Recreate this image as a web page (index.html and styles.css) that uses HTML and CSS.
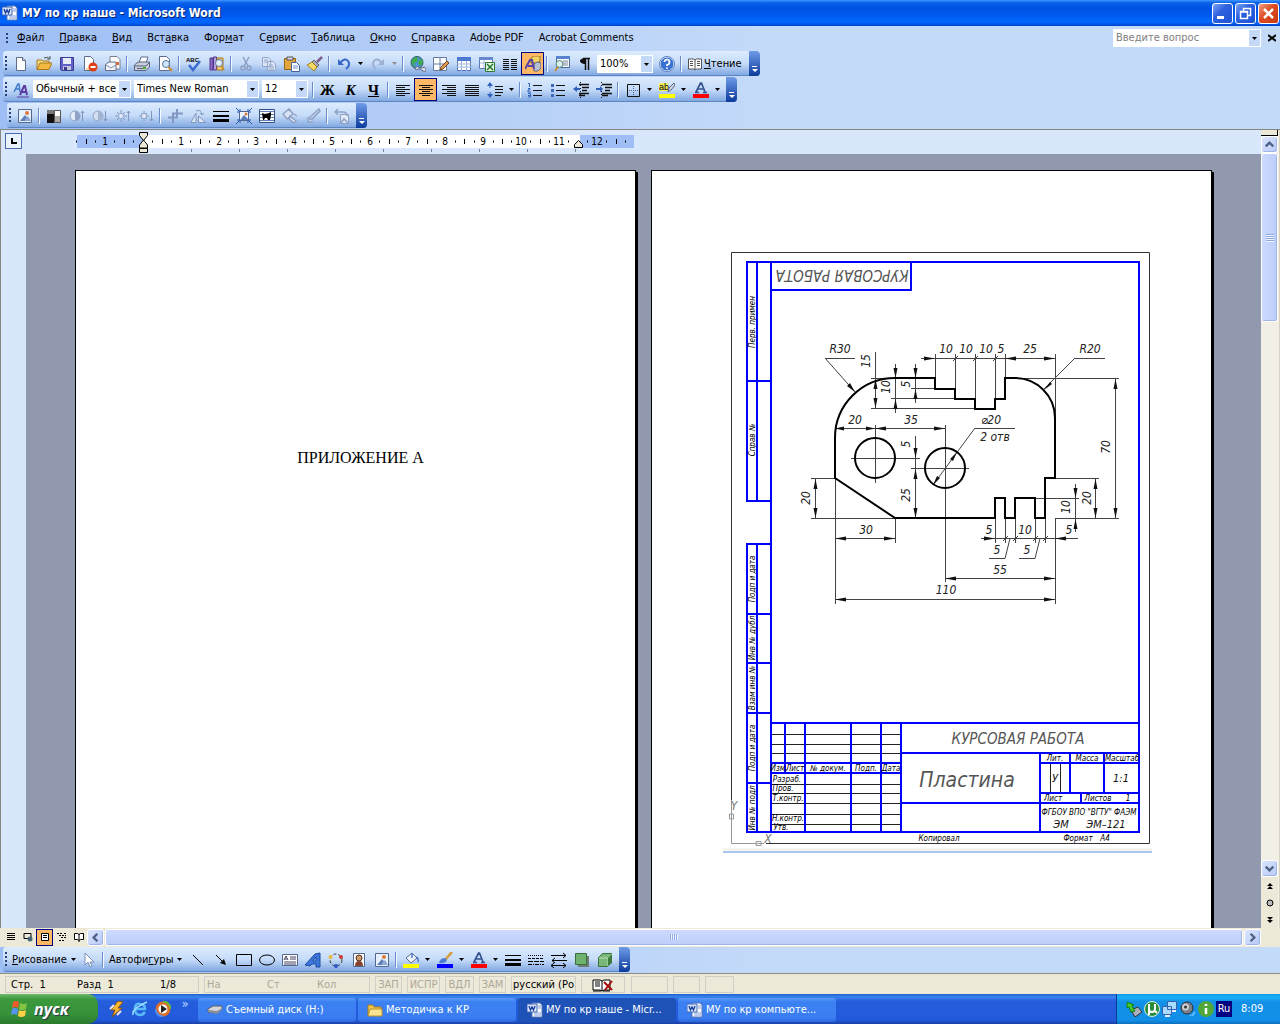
FILE: index.html
```html
<!DOCTYPE html>
<html lang="ru">
<head>
<meta charset="utf-8">
<title>МУ по кр наше - Microsoft Word</title>
<link rel="stylesheet" href="styles.css">
</head>
<body>
<svg class="defs" aria-hidden="true">
<defs>
<symbol id="word" viewBox="0 0 16 16"><path d="M5 1h8l2 2v12H5z" fill="#fff" stroke="#5a78b8"/><path d="M11 4h3M11 6h3M7 11h7M7 13h7" stroke="#7d9ad6"/><path d="M0 2h10v8H0z" fill="#dfe9fb" stroke="#3f65b5"/><path d="M2 4l1.500 4L5 5l1.500 3L8 4" fill="none" stroke="#2146a0" stroke-width="1.500"/></symbol>
<symbol id="new" viewBox="0 0 16 16"><path d="M3.500 1.500h6l3 3v10h-9z" fill="#fff" stroke="#5d6c8c"/><path d="M9.500 1.500v3h3" fill="#cfd8ea" stroke="#5d6c8c"/></symbol>
<symbol id="open" viewBox="0 0 16 16"><path d="M1 13V4h5l1 1h6v3" fill="#f9dc86" stroke="#a8791a"/><path d="M1 13.500L4 7h12l-3 6.500z" fill="#f4b942" stroke="#a8791a"/><path d="M8 2q4-2 6 1M14 0v3h-3" fill="none" stroke="#555"/></symbol>
<symbol id="save" viewBox="0 0 16 16"><path d="M1.500 1.500h13v13h-12l-1-1z" fill="#6060c8" stroke="#3b3b94"/><path d="M4 2h8v6H4z" fill="#e8ecfb"/><path d="M4 10h8v4H4z" fill="#c6c8de"/><path d="M5 11h3v3H5z" fill="#38388c"/></symbol>
<symbol id="perm" viewBox="0 0 16 16"><path d="M2.500.5h6l3 3v11h-9z" fill="#fff" stroke="#5d6c8c"/><path d="M4 13h4" stroke="#e6a93a"/><circle cx="11" cy="11" r="4.500" fill="#dd3d18"/><path d="M8.500 11h5" stroke="#fff" stroke-width="2"/></symbol>
<symbol id="mail" viewBox="0 0 16 16"><path d="M5 .5h7l3 3V13H5z" fill="#fff" stroke="#777f94"/><path d="M.5 8.500L4 6h7v8.500H.5z" fill="#f2f4fb" stroke="#656d82"/><path d="M1 9l5 3 5-3" fill="none" stroke="#8790a8"/><path d="M11 6h3v3h-3z" fill="#d96a3a"/></symbol>
<symbol id="print" viewBox="0 0 16 16"><path d="M5 7l2-6h7l-2 6z" fill="#fff" stroke="#5d6c8c"/><path d="M.5 9L4 6h11.500v5L12 14.500H.5z" fill="#c8cddd" stroke="#59627a"/><path d="M1 10h11l3-3M3 12.500h7" stroke="#59627a" fill="none"/><path d="M9 11h3v2H9z" fill="#43b32b"/></symbol>
<symbol id="preview" viewBox="0 0 16 16"><path d="M2.500.5h7l3 3v11h-10z" fill="#fff" stroke="#5d6c8c"/><circle cx="9" cy="8" r="3.500" fill="#cfe6f8" stroke="#59789f"/><path d="M11.500 11l3.500 4" stroke="#c98f35" stroke-width="2"/></symbol>
<symbol id="spell" viewBox="0 0 16 16"><text x="0" y="6" class="glyph-abc">ABC</text><path d="M3 9l4 5 7-9" fill="none" stroke="#3c6bd0" stroke-width="2.500"/></symbol>
<symbol id="research" viewBox="0 0 16 16"><path d="M1 2h3v12H1z" fill="#8b6bc4" stroke="#50358c"/><path d="M4.500 1h3v13h-3z" fill="#b9a0e0" stroke="#50358c"/><path d="M8 2h6v12H8z" fill="#f0cf80" stroke="#a8791a"/><circle cx="10" cy="7" r="3.500" fill="#e3f2fd" stroke="#59789f"/><path d="M12 10l3 4" stroke="#c98f35" stroke-width="2"/></symbol>
<symbol id="cut" viewBox="0 0 16 16"><path d="M5 1l5 9M11 1L6 10" stroke="#8da0c4" stroke-width="1.500"/><circle cx="5" cy="12" r="2" fill="none" stroke="#8da0c4" stroke-width="1.500"/><circle cx="11" cy="12" r="2" fill="none" stroke="#8da0c4" stroke-width="1.500"/></symbol>
<symbol id="copy" viewBox="0 0 16 16"><path d="M1.500 1.500h6l2 2v7h-8zM6.500 5.500h6l2 2v7h-8z" fill="#dce5f6" stroke="#93a5c8"/><path d="M3 4h4M3 6h3M8 9h4M8 11h5M8 13h5" stroke="#93a5c8"/></symbol>
<symbol id="paste" viewBox="0 0 16 16"><path d="M.5 2.500h11v11H.5z" fill="#e2a63c" stroke="#91661b"/><path d="M3 1h6v3H3z" fill="#d8dbe6" stroke="#555"/><path d="M7.500 6.500h5l3 3v6h-8z" fill="#fff" stroke="#4663a0"/><path d="M9 10h5M9 12h5" stroke="#6d8ccc"/></symbol>
<symbol id="brush" viewBox="0 0 16 16"><path d="M15 1l-5 5" stroke="#7b5c8c" stroke-width="2.500"/><path d="M7 4l5 5-2 2-5-5z" fill="#a8a8b8" stroke="#666"/><path d="M5 6l5 5-3 4-7-6z" fill="#f5db64" stroke="#9a7d20"/></symbol>
<symbol id="undo" viewBox="0 0 16 16"><path d="M2 3v6h6z" fill="#3567c8"/><path d="M4 7q5-6 8-2t-2 8" fill="none" stroke="#3567c8" stroke-width="2"/></symbol>
<symbol id="redo" viewBox="0 0 16 16"><path d="M14 3v6H8z" fill="#9db0d3"/><path d="M12 7q-5-6-8-2t2 8" fill="none" stroke="#9db0d3" stroke-width="2"/></symbol>
<symbol id="dd" viewBox="0 0 5 3"><path d="M0 0h5L2.500 3z" fill="currentColor"/></symbol>
<symbol id="globe" viewBox="0 0 16 16"><circle cx="7" cy="6.500" r="6" fill="#4b8fe0" stroke="#2c6050"/><path d="M2 4q3-4 6-2l-1 4-3 1 2 4q-5-2-4-7zM9 3l4 2-2 5-3-2z" fill="#3fae48"/><path d="M5 12q2-3 5 0h2q3-2 4 1t-3 2l-3-2H8q-3 2-3-1z" fill="#e0e4ee" stroke="#58627c"/></symbol>
<symbol id="tblpen" viewBox="0 0 16 16"><path d="M.5 1.500h13v13H.5zM7 1v13M1 8h13" fill="#fff" stroke="#687aa0"/><path d="M7 14l1-3 6-6 2 2-6 6z" fill="#e39a4c" stroke="#6b4524"/></symbol>
<symbol id="tbl" viewBox="0 0 16 16"><path d="M1.500 1.500h13v13h-13z" fill="#fff" stroke="#4f72b8"/><path d="M1 1h14v4H1z" fill="#4b78d0"/><path d="M1 8h14M1 11h14M5.500 5v10M10.500 5v10" stroke="#9db4dc"/></symbol>
<symbol id="excel" viewBox="0 0 16 16"><path d="M.5 1.500h13v11H.5z" fill="#fff" stroke="#5a7ab4"/><path d="M0 1h14v3H0z" fill="#6788cc"/><path d="M1 7h12M5 4v8" stroke="#9db4dc"/><path d="M6.500 6.500h9v9h-9z" fill="#e2f2df" stroke="#2c7c34"/><path d="M8 8l6 6M14 8l-6 6" stroke="#23762c" stroke-width="1.500"/></symbol>
<symbol id="cols" viewBox="0 0 16 16"><path d="M1 3.500h6M1 5.500h6M1 7.500h6M1 9.500h6M1 11.500h6M1 13.500h6M9 3.500h6M9 5.500h6M9 7.500h6M9 9.500h6M9 11.500h6M9 13.500h6" stroke="#111"/></symbol>
<symbol id="drawing" viewBox="0 0 16 16"><path d="M6 2l3-2h6v5l-3 2H6z" fill="#f6d267" stroke="#9c7420"/><path d="M9 8l3-2 4 1v5l-3 3H9z" fill="#b9bed2" stroke="#5f667e"/><path d="M0 13L5 4h2l2 9M3 10h5" fill="none" stroke="#5544a8" stroke-width="2"/></symbol>
<symbol id="docmap" viewBox="0 0 16 16"><path d="M2.500.5h13v11h-13z" fill="#fff" stroke="#49699f"/><path d="M2 0h14v3H2z" fill="#5a83cf"/><path d="M9 5h5M9 7h5M9 9h5" stroke="#789"/><circle cx="5.500" cy="8" r="3.500" fill="#d7f0ee" stroke="#587"/><path d="M4 11l-3 4" stroke="#c98f35" stroke-width="2"/></symbol>
<symbol id="para" viewBox="0 0 16 16"><path d="M13 2.500H6M8.500 2v12M11.500 2v12" stroke="#111" stroke-width="1.500"/><path d="M9 2v6H7q-4-1-4-3t4-3z" fill="#111"/></symbol>
<symbol id="help" viewBox="0 0 16 16"><circle cx="8" cy="8" r="7" fill="#3a72d4" stroke="#fff"/><circle cx="8" cy="8" r="7.500" fill="none" stroke="#5b80c0"/><path d="M5.500 6q0-2.500 2.500-2.500T10.500 6 8 9v1M8 11.500v1.500" fill="none" stroke="#fff" stroke-width="1.700"/></symbol>
<symbol id="read" viewBox="0 0 16 16"><path d="M1.500 3h5L8 4l1.500-1h5v10h-5L8 14l-1.500-1h-5z" fill="#fff" stroke="#555"/><path d="M8 4v10M3 5.500h3M3 7.500h3M3 9.500h3M10 5.500h3M10 7.500h3M10 9.500h3" stroke="#555"/></symbol>
<symbol id="styles" viewBox="0 0 16 16"><path d="M1 10L5 2h1l1 8M3 7h4" fill="none" stroke="#3e78cc" stroke-width="1.500"/><path d="M7 13l4-9h1l2 9M9 10h4" fill="none" stroke="#5b3ea0" stroke-width="2"/><path d="M4 15h12" stroke="#5b3ea0"/></symbol>
<symbol id="al" viewBox="0 0 16 16"><path d="M1 3.500h14M1 5.500h9M1 7.500h14M1 9.500h9M1 11.500h14M1 13.500h9" stroke="#111"/></symbol>
<symbol id="ac" viewBox="0 0 16 16"><path d="M1 3.500h14M4 5.500h8M1 7.500h14M4 9.500h8M1 11.500h14M4 13.500h8" stroke="#111"/></symbol>
<symbol id="ar" viewBox="0 0 16 16"><path d="M1 3.500h14M6 5.500h9M1 7.500h14M6 9.500h9M1 11.500h14M6 13.500h9" stroke="#111"/></symbol>
<symbol id="aj" viewBox="0 0 16 16"><path d="M1 3.500h14M1 5.500h14M1 7.500h14M1 9.500h14M1 11.500h14M1 13.500h14" stroke="#111"/></symbol>
<symbol id="spacing" viewBox="0 0 16 16"><path d="M8 4.500h8M8 7.500h8M8 10.500h8M8 13.500h6" stroke="#111"/><path d="M3 2v4M3 10v4" stroke="#2e60bc"/><path d="M0 4l3-4 3 4zM0 12l3 4 3-4z" fill="#2e60bc"/></symbol>
<symbol id="num" viewBox="0 0 16 16"><path d="M6 3.500h9M6 8.500h9M6 13.500h9" stroke="#111"/><path d="M1 1.500h1.500V5M1 6.500h2v1.500H1v2h3M1 11.500h2.500V15H1M1 13.500h2" fill="none" stroke="#2e60bc"/></symbol>
<symbol id="bul" viewBox="0 0 16 16"><path d="M6 3.500h9M6 8.500h9M6 13.500h9" stroke="#111"/><path d="M1 2h3v3H1zM1 7h3v3H1zM1 12h3v3H1z" fill="#3e69bd"/></symbol>
<symbol id="outd" viewBox="0 0 16 16"><path d="M6 2.500h10M9 5.500h7M9 8.500h5M6 11.500h10M6 13.500h6" stroke="#111" stroke-width="1.500"/><path d="M7.500 0v16" stroke="#111" stroke-dasharray="1 2"/><path d="M0 7l4-3v6z" fill="#2e60bc"/><path d="M3 7h4" stroke="#2e60bc" stroke-width="2"/></symbol>
<symbol id="ind" viewBox="0 0 16 16"><path d="M6 2.500h10M9 5.500h7M9 8.500h5M6 11.500h10M6 13.500h6" stroke="#111" stroke-width="1.500"/><path d="M5.500 0v16" stroke="#111" stroke-dasharray="1 2"/><path d="M7 7L4 4v6z" fill="#2e60bc"/><path d="M0 7h4" stroke="#2e60bc" stroke-width="2"/></symbol>
<symbol id="border" viewBox="0 0 16 16"><path d="M2.500 2.500h12v12h-12z" fill="none" stroke="#111"/><path d="M8.500 4v9M4 8.500h9" stroke="#4c659c" stroke-dasharray="1 1"/></symbol>
<symbol id="hl" viewBox="0 0 16 16"><path d="M0 1h9v8H0z" fill="#f6ee5d"/><text x="0" y="8" class="glyph-ab">ab</text><path d="M15 1l-5 5-1 4 3-2 4-5z" fill="#d7dcea" stroke="#536077"/><path d="M0 12h16v4H0z" fill="#ff0"/></symbol>
<symbol id="fontcol" viewBox="0 0 16 16"><path d="M3 10L7.500 1h1L12 10M5 7h6M2 10.500h4M10 10.500h4" fill="none" stroke="#35548f" stroke-width="1.700"/><path d="M0 12h16v4H0z" fill="#f00"/></symbol>
<symbol id="fill" viewBox="0 0 16 16"><path d="M3 6l6-5 5 5-6 5z" fill="#eef3fb" stroke="#5f6c88"/><path d="M9 1v5M13 5q3 1 2 5" fill="none" stroke="#4b76c8" stroke-width="1.500"/><path d="M0 12h16v4H0z" fill="#ff0"/></symbol>
<symbol id="line" viewBox="0 0 16 16"><path d="M15 0L8 8" stroke="#d5993d" stroke-width="2.500"/><path d="M2 11q1-5 6-5l2 2q-2 4-8 3z" fill="#4d7dd2"/><path d="M0 12h16v4H0z" fill="#00f"/></symbol>
<symbol id="pic" viewBox="0 0 16 16"><path d="M1.500 1.500h13v13h-13z" fill="#e7f1fd" stroke="#54678d"/><path d="M3 13l5-6 5 6z" fill="#5c7dba"/><path d="M8 11l3-3 3 5H8z" fill="#8ba5d5"/><circle cx="10" cy="5" r="2" fill="#dd7a37"/></symbol>
<symbol id="color" viewBox="0 0 16 16"><path d="M1 2h7v13H1z" fill="#111"/><path d="M1 2h7v4H1z" fill="#777"/><path d="M8.500 2.500h6v12h-6z" fill="#fff" stroke="#555"/><path d="M9 8h5v6H9z" fill="#aaa"/></symbol>
<symbol id="contrast" viewBox="0 0 16 16"><circle cx="6" cy="8" r="5" fill="#e3ebf8" stroke="#8fa2c6"/><path d="M6 3a5 5 0 0 1 0 10z" fill="#8fa2c6"/><path d="M13.500 3v10M12 5l1.500-2L15 5" fill="none" stroke="#7f94bb"/></symbol>
<symbol id="contrastd" viewBox="0 0 16 16"><circle cx="6" cy="8" r="5" fill="#d2ddf0" stroke="#8fa2c6"/><path d="M6 3a5 5 0 0 1 0 10z" fill="#a4b5d2"/><path d="M13.500 3v10M12 11l1.500 2 1.500-2" fill="none" stroke="#7f94bb"/></symbol>
<symbol id="sun" viewBox="0 0 16 16"><circle cx="6" cy="8" r="2.500" fill="#e8effb" stroke="#8fa2c6"/><path d="M6 2v3M6 11v3M0 8h3M9 8h3M2 4l2 2M8 10l2 2M10 4L8 6M4 10l-2 2M13.500 3v10M12 5l1.500-2L15 5" fill="none" stroke="#8398c0"/></symbol>
<symbol id="sund" viewBox="0 0 16 16"><circle cx="6" cy="8" r="2.500" fill="#e8effb" stroke="#8fa2c6"/><path d="M6 3v2M6 11v2M1 8h2M9 8h2M3 5l1 1M8 10l1 1M9 5L8 6M4 10l-1 1M13.500 3v10M12 11l1.500 2 1.500-2" fill="none" stroke="#8398c0"/></symbol>
<symbol id="crop" viewBox="0 0 16 16"><path d="M6 15V5.500h10M1 9.500h9V1" fill="none" stroke="#8398c0" stroke-width="2"/></symbol>
<symbol id="rot" viewBox="0 0 16 16"><path d="M1 14.500L6 5v9.500zM8.500 14.500h7L8.500 8z" fill="#dfe7f5" stroke="#8398c0"/><path d="M6 3q5-2 6 3M12 7l-2-2M12 7l2-2" fill="none" stroke="#8398c0"/></symbol>
<symbol id="lines" viewBox="0 0 16 16"><path d="M0 3.500h16" stroke="#000"/><path d="M0 8h16" stroke="#000" stroke-width="2"/><path d="M0 12.500h16" stroke="#000" stroke-width="3"/></symbol>
<symbol id="compress" viewBox="0 0 16 16"><path d="M3.500 3.500h9v9h-9z" fill="#eef5ff" stroke="#54678d"/><path d="M4 12l4-5 5 5z" fill="#5c7dba"/><circle cx="10" cy="6" r="1.500" fill="#dd7a37"/><path d="M0 0l4 4M16 0l-4 4M0 16l4-4M16 16l-4-4M1 4h3V1M12 1v3h3M1 12h3v3M15 12h-3v3" fill="none" stroke="#2b59ad"/></symbol>
<symbol id="wrap" viewBox="0 0 16 16"><path d="M.5 1.500h15v13H.5z" fill="#fff" stroke="#34507f"/><path d="M1 3.500h14M1 12.500h14M1 6.500h14M1 9.500h14" stroke="#5c82bf"/><path d="M3 5l3 1 4-1 2-1v3l-1 5H9l-1-2H6l-1 2H4z" fill="#000"/></symbol>
<symbol id="fmtpic" viewBox="0 0 16 16"><path d="M1 6l6-5 4 5-6 5zM8 8l6 5-2 2-5-4zM12 6l3 2" fill="#dbe4f4" stroke="#8fa2c6" stroke-width="1.500"/></symbol>
<symbol id="transp" viewBox="0 0 16 16"><path d="M14 1l1 2-8 8H5V9zM3 9v5h5" fill="#c9d5eb" stroke="#8fa2c6" stroke-width="1.500"/></symbol>
<symbol id="reset" viewBox="0 0 16 16"><path d="M6.500 6.500h8v9h-8z" fill="#e2eaf7" stroke="#8fa2c6"/><path d="M7 15l3-4 4 4M1 4h8q4 0 4 4M4 1L1 4l3 3" fill="none" stroke="#8fa2c6" stroke-width="1.500"/></symbol>
<symbol id="cursor" viewBox="0 0 16 16"><path d="M4 1v12l3-3 2 5 2-1-2-4h4z" fill="#fff" stroke="#7a8fb8"/></symbol>
<symbol id="sline" viewBox="0 0 16 16"><path d="M3 3l10 10" stroke="#000"/></symbol>
<symbol id="sarrow" viewBox="0 0 16 16"><path d="M3 3l8 8" stroke="#000"/><path d="M13 13L7 11l4-4z" fill="#000"/></symbol>
<symbol id="srect" viewBox="0 0 16 16"><path d="M.5 2.500h15v11H.5z" fill="none" stroke="#000"/></symbol>
<symbol id="soval" viewBox="0 0 16 16"><ellipse cx="8" cy="8" rx="7.500" ry="5" fill="none" stroke="#000"/></symbol>
<symbol id="tbox" viewBox="0 0 16 16"><path d="M.5 2.500h15v11H.5z" fill="#fff" stroke="#54678d"/><path d="M2 8l2-4 2 4M3 7h2M8 5h6M8 7h6M2 10h12M2 12h12" fill="none" stroke="#446"/></symbol>
<symbol id="wordart" viewBox="0 0 16 16"><path d="M0 13L10 2l5-1v14h-4v-3H7l-2 2zM11 5L8 9h3z" fill="#3b76d8" stroke="#1c4aa0"/></symbol>
<symbol id="diagram" viewBox="0 0 16 16"><circle cx="8" cy="8" r="6" fill="none" stroke="#333" stroke-dasharray="3 2"/><circle cx="2.500" cy="5" r="2" fill="#e8b93c"/><circle cx="13" cy="5" r="2" fill="#cc3c30"/><circle cx="8" cy="14" r="2" fill="#2c56c4"/></symbol>
<symbol id="clip" viewBox="0 0 16 16"><path d="M2.500 1.500h11v13h-11z" fill="#fff" stroke="#54678d"/><circle cx="8" cy="6" r="3" fill="#d19a67" stroke="#4c342b"/><path d="M4 14q0-5 4-5t4 5z" fill="#88412c"/></symbol>
<symbol id="dash" viewBox="0 0 16 16"><path d="M0 3.500h16" stroke="#000" stroke-dasharray="1 1"/><path d="M0 6.500h16" stroke="#000" stroke-dasharray="3 1"/><path d="M0 9.500h16" stroke="#000" stroke-dasharray="5 1"/><path d="M0 12.500h16" stroke="#000" stroke-dasharray="4 1 1 1"/></symbol>
<symbol id="arrows" viewBox="0 0 16 16"><path d="M0 3.500h15M12 1l3 2.500L12 6M1 8.500h15M4 6L1 8.500 4 11M0 13.500h15M12 11l3 2.500-3 2.500M3 11l-3 2.500L3 16" fill="none" stroke="#000"/></symbol>
<symbol id="shadow" viewBox="0 0 16 16"><path d="M4 4h11v11H4z" fill="#6f7c74"/><path d="M1.500 1.500h11v11h-11z" fill="#6fb26f" stroke="#39713a"/></symbol>
<symbol id="cube" viewBox="0 0 16 16"><path d="M1.500 5.500l4-4h9v9l-4 4h-9z" fill="#79b779" stroke="#39713a"/><path d="M2 6h9l4-4M11 6v8" fill="none" stroke="#b9ddb9"/><path d="M11 6l4-4v9l-4 3z" fill="#3b7c3d"/></symbol>
<symbol id="up" viewBox="0 0 16 16"><path d="M4 10l4-4 4 4" fill="none" stroke="#4d6185" stroke-width="2.500"/></symbol>
<symbol id="down" viewBox="0 0 16 16"><path d="M4 6l4 4 4-4" fill="none" stroke="#4d6185" stroke-width="2.500"/></symbol>
<symbol id="left" viewBox="0 0 16 16"><path d="M10 4L6 8l4 4" fill="none" stroke="#4d6185" stroke-width="2.500"/></symbol>
<symbol id="right" viewBox="0 0 16 16"><path d="M6 4l4 4-4 4" fill="none" stroke="#4d6185" stroke-width="2.500"/></symbol>
<symbol id="v1" viewBox="0 0 12 12"><path d="M2 2.500h8M2 4.500h8M2 6.500h8M2 8.500h8" stroke="#000"/></symbol>
<symbol id="v2" viewBox="0 0 12 12"><path d="M2 2.500h7v5H2z" fill="none" stroke="#000"/><circle cx="8" cy="8" r="2.500" fill="#467"/></symbol>
<symbol id="v3" viewBox="0 0 12 12"><path d="M2.500 2.500h7v7h-7zM4 4.500h4M4 6.500h4" fill="#fff" stroke="#000"/></symbol>
<symbol id="v4" viewBox="0 0 12 12"><path d="M1 2.500h5M8 2.500h2M3 4.500h7M5 6.500h5M3 9.500h6" stroke="#000" stroke-dasharray="2 1"/></symbol>
<symbol id="v5" viewBox="0 0 12 12"><path d="M1.500 2.500h3l1.500 1 1.500-1h3v6h-3L6 9.500 4.500 8.500h-3zM6 3v8" fill="#fff" stroke="#000"/></symbol>
<symbol id="book" viewBox="0 0 22 16"><path d="M1 3h7l2 1 2-1h6v10h-6l-2 1-2-1H1z" fill="#fff" stroke="#000"/><path d="M10 4v10M3 5h5M3 7h5M3 9h5M1 14h8M11 14h7" stroke="#000"/><path d="M12 5l8 8M20 4l-7 9" stroke="#a80c0c" stroke-width="2"/></symbol>
<symbol id="drive" viewBox="0 0 16 16"><path d="M1 7l5-3h9v3l-5 4-9-1z" fill="#d4d6dc" stroke="#5c5f6b"/><path d="M1 8l9 1 5-3v2l-5 4-9-2z" fill="#8b8e99"/></symbol>
<symbol id="folder" viewBox="0 0 16 16"><path d="M1 13V3h5l1 2h7v8z" fill="#f0c64e" stroke="#a67f1f"/><path d="M1 14L3 7h12v7z" fill="#fbe48f" stroke="#b88f2b"/></symbol>
<symbol id="winamp" viewBox="0 0 16 16"><path d="M9 0L2 9h4l-3 7 10-9H9l5-6z" fill="#f8b932" stroke="#8b4d10"/><path d="M1 8l4-4M12 10l-4 4" stroke="#e7e7ee" stroke-width="2"/></symbol>
<symbol id="ie" viewBox="0 0 16 16"><path d="M13 11q-2 3-5 3-5 0-5-6t5-5q5 0 5 5H4" fill="none" stroke="#58baf8" stroke-width="2.500"/><path d="M1 14Q-1 8 15 1" fill="none" stroke="#9fdcff" stroke-width="1.500"/></symbol>
<symbol id="wmp" viewBox="0 0 16 16"><circle cx="8" cy="8" r="6" fill="#fff" stroke="#dd6d27" stroke-width="3"/><path d="M8 .5A7.500 7.500 0 0 1 15.500 8" fill="none" stroke="#69b43b" stroke-width="2"/><path d="M.5 8A7.500 7.500 0 0 0 8 15.500" fill="none" stroke="#4d8df2" stroke-width="2"/><path d="M6 4l6 4-6 4z" fill="#222"/></symbol>
<symbol id="flag" viewBox="0 0 20 18"><path d="M3 2q3-2 6 0L8 8Q5 6 2 8z" fill="#ee5a2d"/><path d="M10 3q4 2 7 0l-1 6q-4 2-7 0z" fill="#83c541"/><path d="M2 9q3-2 6 0l-1 6q-3-2-6 0z" fill="#5793f2"/><path d="M9 10q3 2 7 0l-1 6q-4 2-7 0z" fill="#fbd043"/></symbol>
<symbol id="usb" viewBox="0 0 16 16"><path d="M5 9l7-3 4 5-7 5z" fill="#aab1ba" stroke="#333"/><path d="M1 1l7 3-2 1 3 5-4 1-2-5-2 1z" fill="#44c82f" stroke="#167a12"/></symbol>
<symbol id="ut" viewBox="0 0 16 16"><circle cx="8" cy="8" r="7.500" fill="#2a8d3d" stroke="#d9f1dc"/><path d="M5 3v5q0 3 3 3t3-3V3M5 8v6M11 10l2 2" fill="none" stroke="#fff" stroke-width="2"/></symbol>
<symbol id="net" viewBox="0 0 16 16"><path d="M5.500.5h9v8h-9zM.5 5.500h9v8h-9z" fill="#a8dcff" stroke="#3860ac"/><path d="M3 15h5M10 10h4" stroke="#e4eefc" stroke-width="2"/></symbol>
<symbol id="snd" viewBox="0 0 16 16"><circle cx="7" cy="7" r="6" fill="#7c7f86" stroke="#2c2e34"/><circle cx="5.500" cy="6" r="3.500" fill="#c9ccd2"/><circle cx="5.500" cy="6" r="1.500" fill="#333"/><path d="M12 15l3-4M10 15l1-1" stroke="#6fc1ff" stroke-width="1.500"/></symbol>
<symbol id="info" viewBox="0 0 16 16"><circle cx="8" cy="8" r="8" fill="#51a83a"/><path d="M8 3v2M8 7v6" stroke="#fff" stroke-width="2.500"/></symbol>
</defs>
</svg>

<header class="title">
  <svg class="i"><use href="#word"/></svg>
  <h1>МУ по кр наше - Microsoft Word</h1>
  <button class="wb" aria-label="Свернуть"><svg viewBox="0 0 19 19"><path d="M4 13.500h7" stroke="#fff" stroke-width="3"/></svg></button>
  <button class="wb" aria-label="Восстановить"><svg viewBox="0 0 19 19"><path d="M7.500 7V4.500h7v7H12M4.500 7.500h7v7h-7zM4 8h8" fill="none" stroke="#fff" stroke-width="1.500"/></svg></button>
  <button class="wb red" aria-label="Закрыть"><svg viewBox="0 0 19 19"><path d="M5 5l9 9M14 5l-9 9" stroke="#fff" stroke-width="2.500"/></svg></button>
</header>

<div class="bars">
<nav class="menu">
  <span class="grip"></span>
  <button><u>Ф</u>айл</button><button><u>П</u>равка</button><button><u>В</u>ид</button><button>Вст<u>а</u>вка</button><button>Фор<u>м</u>ат</button><button>С<u>е</u>рвис</button><button><u>Т</u>аблица</button><button><u>О</u>кно</button><button><u>С</u>правка</button><button>Ado<u>b</u>e PDF</button><button>Acrobat <u>C</u>omments</button>
  <input class="ask combo" type="text" placeholder="Введите вопрос" aria-label="Введите вопрос">
  <button class="x" aria-label="Закрыть документ"><svg viewBox="0 0 8 8"><path d="M0 1l8 6M8 1L0 7" stroke="#000" stroke-width="2"/></svg></button>
</nav>

<div class="tb">
  <span class="grip"></span>
  <button class="b"><svg class="i"><use href="#new"/></svg></button><button class="b"><svg class="i"><use href="#open"/></svg></button><button class="b"><svg class="i"><use href="#save"/></svg></button><button class="b"><svg class="i"><use href="#perm"/></svg></button><button class="b"><svg class="i"><use href="#mail"/></svg></button><span class="sep"></span>
  <button class="b"><svg class="i"><use href="#print"/></svg></button><button class="b"><svg class="i"><use href="#preview"/></svg></button><span class="sep"></span>
  <button class="b"><svg class="i"><use href="#spell"/></svg></button><button class="b"><svg class="i"><use href="#research"/></svg></button><span class="sep"></span>
  <button class="b"><svg class="i"><use href="#cut"/></svg></button><button class="b"><svg class="i"><use href="#copy"/></svg></button><button class="b"><svg class="i"><use href="#paste"/></svg></button><button class="b"><svg class="i"><use href="#brush"/></svg></button><span class="sep"></span>
  <button class="b"><svg class="i"><use href="#undo"/></svg></button><button class="dd"><svg><use href="#dd"/></svg></button><button class="b"><svg class="i"><use href="#redo"/></svg></button><button class="dd off"><svg><use href="#dd"/></svg></button><span class="sep"></span>
  <button class="b"><svg class="i"><use href="#globe"/></svg></button><button class="b"><svg class="i"><use href="#tblpen"/></svg></button><button class="b"><svg class="i"><use href="#tbl"/></svg></button><button class="b"><svg class="i"><use href="#excel"/></svg></button><button class="b"><svg class="i"><use href="#cols"/></svg></button><button class="b on"><svg class="i"><use href="#drawing"/></svg></button><span class="sep"></span>
  <button class="b"><svg class="i"><use href="#docmap"/></svg></button><button class="b"><svg class="i"><use href="#para"/></svg></button>
  <select class="combo c-zoom" aria-label="Масштаб"><option>100%</option></select>
  <button class="b"><svg class="i"><use href="#help"/></svg></button><span class="sep"></span>
  <button class="txt read"><svg class="i"><use href="#read"/></svg><span><u>Ч</u>тение</span></button>
  <button class="end" aria-label="Параметры панели"><svg viewBox="0 0 7 7"><path d="M1 0h5v1H1zM1 3h6L4 6z" fill="#fff"/></svg></button>
</div>

<div class="tb">
  <span class="grip"></span>
  <button class="b"><svg class="i"><use href="#styles"/></svg></button>
  <select class="combo c-style" aria-label="Стиль"><option>Обычный + все</option></select>
  <select class="combo c-font" aria-label="Шрифт"><option>Times New Roman</option></select>
  <select class="combo c-size" aria-label="Размер"><option>12</option></select><span class="sep"></span>
  <button class="b ch"><b>Ж</b></button><button class="b ch"><b><i>К</i></b></button><button class="b ch"><b><u>Ч</u></b></button><span class="sep"></span>
  <button class="b"><svg class="i"><use href="#al"/></svg></button><button class="b on"><svg class="i"><use href="#ac"/></svg></button><button class="b"><svg class="i"><use href="#ar"/></svg></button><button class="b"><svg class="i"><use href="#aj"/></svg></button><button class="b"><svg class="i"><use href="#spacing"/></svg></button><button class="dd"><svg><use href="#dd"/></svg></button><span class="sep"></span>
  <button class="b"><svg class="i"><use href="#num"/></svg></button><button class="b"><svg class="i"><use href="#bul"/></svg></button><button class="b"><svg class="i"><use href="#outd"/></svg></button><button class="b"><svg class="i"><use href="#ind"/></svg></button><span class="sep"></span>
  <button class="b"><svg class="i"><use href="#border"/></svg></button><button class="dd"><svg><use href="#dd"/></svg></button><button class="b"><svg class="i"><use href="#hl"/></svg></button><button class="dd"><svg><use href="#dd"/></svg></button><button class="b"><svg class="i"><use href="#fontcol"/></svg></button><button class="dd"><svg><use href="#dd"/></svg></button>
  <button class="end" aria-label="Параметры панели"><svg viewBox="0 0 7 7"><path d="M1 0h5v1H1zM1 3h6L4 6z" fill="#fff"/></svg></button>
</div>

<div class="tb pictb">
  <span class="grip"></span>
  <button class="b"><svg class="i"><use href="#pic"/></svg></button><span class="sep"></span>
  <button class="b"><svg class="i"><use href="#color"/></svg></button><button class="b"><svg class="i"><use href="#contrast"/></svg></button><button class="b"><svg class="i"><use href="#contrastd"/></svg></button><button class="b"><svg class="i"><use href="#sun"/></svg></button><button class="b"><svg class="i"><use href="#sund"/></svg></button><span class="sep"></span>
  <button class="b"><svg class="i"><use href="#crop"/></svg></button><button class="b"><svg class="i"><use href="#rot"/></svg></button><button class="b"><svg class="i"><use href="#lines"/></svg></button><button class="b"><svg class="i"><use href="#compress"/></svg></button><button class="b"><svg class="i"><use href="#wrap"/></svg></button><button class="b"><svg class="i"><use href="#fmtpic"/></svg></button><button class="b"><svg class="i"><use href="#transp"/></svg></button><span class="sep"></span>
  <button class="b"><svg class="i"><use href="#reset"/></svg></button>
  <button class="end" aria-label="Параметры панели"><svg viewBox="0 0 7 7"><path d="M1 0h5v1H1zM1 3h6L4 6z" fill="#fff"/></svg></button>
</div>
</div>

<main class="work">
  <div class="vruler"><button class="tab" aria-label="Табуляция"><svg viewBox="0 0 8 8"><path d="M2 1v5h5" fill="none" stroke="#000" stroke-width="2"/></svg></button></div>
  <div class="center">
    <div class="ruler">
      <svg width="560" height="24" viewBox="76 130 560 24">
        <path d="M77 135h66v13H77zM580 135h54v13h-54z" fill="#9ebef5"/><path d="M143 135h437v13H143z" fill="#fff"/>
        <path d="M86.500 139v5M124.500 139v5M162.500 139v5M200.500 139v5M238.500 139v5M276.500 139v5M313.500 139v5M351.500 139v5M389.500 139v5M427.500 139v5M464.500 139v5M502.500 139v5M540.500 139v5M616.500 139v5" stroke="#000"/>
        <path d="M76 141.500h1M95 141.500h1M114 141.500h1M133 141.500h1M152 141.500h1M171 141.500h1M190 141.500h1M209 141.500h1M228 141.500h1M247 141.500h1M266 141.500h1M285 141.500h1M304 141.500h1M323 141.500h1M342 141.500h1M360 141.500h1M379 141.500h1M398 141.500h1M417 141.500h1M436 141.500h1M455 141.500h1M474 141.500h1M493 141.500h1M511 141.500h1M530 141.500h1M549 141.500h1M568 141.500h1M587 141.500h1M606 141.500h1M625 141.500h1" stroke="#000" stroke-width="2"/>
        <path d="M191.500 149v3M239.500 149v3M287.500 149v3M335.500 149v3M383.500 149v3M431.500 149v3M479.500 149v3M527.500 149v3M575.500 149v3" stroke="#7d869c"/>
        <g class="rnum"><text x="105" y="145">1</text><text x="181" y="145">1</text><text x="219" y="145">2</text><text x="256" y="145">3</text><text x="294" y="145">4</text><text x="332" y="145">5</text><text x="370" y="145">6</text><text x="408" y="145">7</text><text x="445" y="145">8</text><text x="483" y="145">9</text><text x="521" y="145">10</text><text x="559" y="145">11</text><text x="597" y="145">12</text></g>
        <path d="M139.500 132.500h8v3l-4 5-4-5zM139.500 148v-3l4-5 4 5v3zM139.500 148.500h8v4h-8zM574.500 147.500v-3l4-4 4 4v3z" fill="#ece9d8" stroke="#000"/>
      </svg>
    </div>
    <div class="doc">
      <section class="page"><p>ПРИЛОЖЕНИЕ А</p></section>
      <section class="page">
        <svg class="fig" width="430" height="608" viewBox="723 246 430 608">
          <path d="M731.500 800V252.500h418v591H766" fill="none" stroke="#333"/>
          <path d="M731.500 800v43.500H764M729.500 819v-5h4v5zM756 841.500h5v4h-5z" fill="none" stroke="#999"/>
          <path d="M723 849.500h429" stroke="#f1efe6" stroke-width="2"/><path d="M723 852h429" stroke="#a9c6ee" stroke-width="2"/>
          <path class="thin" d="M825 358.500h30M1075 358.500h30M975 428.500h40M871 378.500h24M871 408.500h104M891 398.500h64M911 388.500h24M875.500 352v56M1015 378.500h104M1055 518.500h64M811 478.500h24M811 518.500h84M935.500 354v24M955.500 354v34M975.500 354v44M995.500 354v44M1005.500 354v24M1055.500 354v66M835.500 425v15M875.500 425v58M945.500 425v157M851 458.500h69M911 468.500h58M835.500 478v126M895.500 518v25M1055.500 518v86M1055 478.500h44M1035 498.500h44M995.500 518v25M1005.500 518v25M1015.500 518v25M1035.500 518v25M1045.500 518v25"/>
          <path class="thin" d="M921 358.500h134M981 538.500h97M989 558.500h16l5-20M1019 558.500h16l5-20M953 361l5-5M973 361l5-5M993 361l5-5M1003 541l5-5M1013 541l5-5M1033 541l5-5M1043 541l5-5M895.500 364v49M915.500 364v39M915.500 436v82M1075.500 484v48M825 358l30 34M1075 358l-31 31M975 428l-42 57M1115.500 378v140M835 428.500h110M815.500 478v40M835 538.500h60M1095.500 478v40M945 578.500h110M835 599.500h220"/>
          <path class="tips" d="M935 358.500l-11-2v4zM1055 358.500l-11-2v4zM875 428.500l-9-2v4zM945 428.500l-11-2v4zM895 538.500l-11-2v4zM995 538.500l-11-2v4zM1055 578.500l-11-2v4zM1055 599.500l-11-2v4zM1005 358.500l11-2v4zM835 428.500l9-2v4zM875 428.500l11-2v4zM835 538.500l11-2v4zM1055 538.500l11-2v4zM945 578.500l11-2v4zM835 599.500l11-2v4zM895.500 378l-2-10h4zM875.500 408l-2-10h4zM915.500 378l-2-10h4zM915.500 458l-2-10h4zM915.500 518l-2-10h4zM815.500 518l-2-10h4zM1115.500 518l-2-10h4zM1095.500 518l-2-10h4zM1075.500 498l-2-10h4zM875.500 379l-2 10h4zM895.500 399l-2 10h4zM915.500 389l-2 10h4zM915.500 469l-2 10h4zM815.500 479l-2 10h4zM1115.500 379l-2 10h4zM1095.500 479l-2 10h4zM1075.500 519l-2 10h4zM855 392l-5-9-3 3zM1044 390l8-6-2-2zM957 452l-4 9-3-2zM933 485l7-7-3-2z"/>
          <g class="thick"><path d="M835 478v-40a60 60 0 0 1 60-60h40v11h20v10h20v10h20v-10h10v-21h10a40 40 0 0 1 40 40v60h-10v40h-10v-20h-20v20h-10v-20h-10v20H895z"/><circle cx="875" cy="458" r="20"/><circle cx="945" cy="468" r="20"/></g>
          <g class="dim">
            <text x="840" y="353">R30</text><text x="1090" y="353">R20</text><text x="946" y="353">10</text><text x="966" y="353">10</text><text x="986" y="353">10</text><text x="1001" y="353">5</text><text x="1030" y="353">25</text><text x="855" y="424">20</text><text x="911" y="424">35</text><text x="991" y="424">⌀20</text><text x="995" y="441">2 отв</text><text x="866" y="534">30</text><text x="989" y="534">5</text><text x="1025" y="534">10</text><text x="1069" y="534">5</text><text x="997" y="554">5</text><text x="1027" y="554">5</text><text x="1000" y="574">55</text><text x="946" y="594">110</text>
            <text transform="translate(870 361) rotate(-90)">15</text><text transform="translate(890 387) rotate(-90)">10</text><text transform="translate(910 384) rotate(-90)">5</text><text transform="translate(910 444) rotate(-90)">5</text><text transform="translate(910 495) rotate(-90)">25</text><text transform="translate(810 498) rotate(-90)">20</text><text transform="translate(1110 447) rotate(-90)">70</text><text transform="translate(1091 498) rotate(-90)">20</text><text transform="translate(1070 507) rotate(-90)">10</text>
          </g>
          <path d="M771 734.500h130M771 744.500h130M771 753.500h130M771 784.500h130M771 793.500h130M771 803.500h130M771 814.500h130M771 824.500h130M1050.500 764v29M1060.500 764v29" stroke="#222"/>
          <path class="blue" d="M771 262h368v570H771zM747 262h24M747 261v240h24M757 262v239M747 381h24M911 262v28H771M747 833V544h24M757 544v288M747 614h24M747 663h24M747 713h24M747 783h24M746 832h25M771 723h368M771 763h130M771 773h130M785 723v50M805 723v109M851 723v109M881 723v109M901 723v109M901 753h238M901 803h139M1040 753v79M1040 763h99M1040 793h99M1040 803h99M1070 753v40M1104 753v40M1081 793v10"/>
          <g class="big"><text x="1018" y="744">КУРСОВАЯ РАБОТА</text><text transform="translate(842 270) rotate(180)">КУРСОВАЯ РАБОТА</text></g>
          <text class="name" x="967" y="787">Пластина</text>
          <g class="sm">
            <text transform="translate(755 322) rotate(-90)">Перв. примен</text><text transform="translate(755 440) rotate(-90)">Справ №</text><text transform="translate(755 579) rotate(-90)">Подп и дата</text><text transform="translate(755 638) rotate(-90)">Инв № дубл</text><text transform="translate(755 688) rotate(-90)">Взам инв №</text><text transform="translate(755 748) rotate(-90)">Подп и дата</text><text transform="translate(755 808) rotate(-90)">Инв № подл</text>
            <text x="779" y="771">Изм.</text><text x="795" y="771">Лист</text><text x="828" y="771">№ докум.</text><text x="866" y="771">Подп.</text><text x="891" y="771">Дата</text>
            <text x="787" y="782">Разраб.</text><text x="783" y="791">Пров.</text><text x="788" y="801">Т.контр.</text><text x="788" y="821">Н.контр.</text><text x="781" y="830">Утв.</text>
            <text x="1055" y="761">Лит.</text><text x="1087" y="761">Масса</text><text x="1122" y="761">Масштаб</text><text x="1053" y="801">Лист</text><text x="1098" y="801">Листов</text><text x="1128" y="801">1</text><text x="939" y="841">Копировал</text><text x="1078" y="841">Формат</text><text x="1105" y="841">А4</text><text x="1089" y="815">ФГБОУ ВПО "ВГТУ" ФАЭМ</text>
          </g>
          <g class="md"><text x="1055" y="782">У</text><text x="1121" y="782">1:1</text><text x="1061" y="828">ЭМ</text><text x="1106" y="828">ЭМ–121</text></g>
          <g class="axis"><text x="734" y="810">Y</text><text x="768" y="843">X</text></g>
        </svg>
      </section>
    </div>
  </div>
  <div class="vscroll">
    <span class="split"></span>
    <button class="sb" aria-label="Вверх"><svg><use href="#up"/></svg></button>
    <span class="thumb v"></span><span class="fillr"></span>
    <button class="sb" aria-label="Вниз"><svg><use href="#down"/></svg></button>
    <button class="nav" aria-label="Предыдущая"><svg viewBox="0 0 8 8"><path d="M1 4l3-3 3 3zM1 7l3-3 3 3z"/></svg></button>
    <button class="nav" aria-label="Выбор объекта"><svg viewBox="0 0 8 8"><circle cx="4" cy="4" r="3" fill="#bbb" stroke="#000"/></svg></button>
    <button class="nav" aria-label="Следующая"><svg viewBox="0 0 8 8"><path d="M1 1l3 3 3-3zM1 4l3 3 3-3z"/></svg></button>
  </div>
</main>

<div class="hrow">
  <button class="vb"><svg><use href="#v1"/></svg></button><button class="vb"><svg><use href="#v2"/></svg></button><button class="vb on"><svg><use href="#v3"/></svg></button><button class="vb"><svg><use href="#v4"/></svg></button><button class="vb"><svg><use href="#v5"/></svg></button>
  <button class="sb" aria-label="Влево"><svg><use href="#left"/></svg></button><span class="thumb h"></span><button class="sb" aria-label="Вправо"><svg><use href="#right"/></svg></button>
</div>

<div class="drawbar">
<div class="tb">
  <span class="grip"></span>
  <button class="txt t1"><span><u>Р</u>исование</span><svg class="tri"><use href="#dd"/></svg></button>
  <button class="b"><svg class="i"><use href="#cursor"/></svg></button><span class="sep"></span>
  <button class="txt t2"><span>Автофи<u>г</u>уры</span><svg class="tri"><use href="#dd"/></svg></button>
  <button class="b"><svg class="i"><use href="#sline"/></svg></button><button class="b"><svg class="i"><use href="#sarrow"/></svg></button><button class="b"><svg class="i"><use href="#srect"/></svg></button><button class="b"><svg class="i"><use href="#soval"/></svg></button><button class="b"><svg class="i"><use href="#tbox"/></svg></button><button class="b"><svg class="i"><use href="#wordart"/></svg></button><button class="b"><svg class="i"><use href="#diagram"/></svg></button><button class="b"><svg class="i"><use href="#clip"/></svg></button><button class="b"><svg class="i"><use href="#pic"/></svg></button><span class="sep"></span>
  <button class="b"><svg class="i"><use href="#fill"/></svg></button><button class="dd"><svg><use href="#dd"/></svg></button><button class="b"><svg class="i"><use href="#line"/></svg></button><button class="dd"><svg><use href="#dd"/></svg></button><button class="b"><svg class="i"><use href="#fontcol"/></svg></button><button class="dd"><svg><use href="#dd"/></svg></button>
  <button class="b"><svg class="i"><use href="#lines"/></svg></button><button class="b"><svg class="i"><use href="#dash"/></svg></button><button class="b"><svg class="i"><use href="#arrows"/></svg></button><button class="b"><svg class="i"><use href="#shadow"/></svg></button><button class="b"><svg class="i"><use href="#cube"/></svg></button>
  <button class="end" aria-label="Параметры панели"><svg viewBox="0 0 7 7"><path d="M1 0h5v1H1zM1 3h6L4 6z" fill="#fff"/></svg></button>
</div>
</div>

<div class="status">
  <span class="c s1"><span>Стр.&nbsp; 1</span><span>Разд&nbsp; 1</span><span>1/8</span></span>
  <span class="c s2"><span>На</span><span>Ст</span><span>Кол</span></span>
  <span class="c g w27">ЗАП</span><span class="c g w33">ИСПР</span><span class="c g w29">ВДЛ</span><span class="c g w27">ЗАМ</span><span class="c w65">русский (Ро</span>
  <span class="c w40"><svg width="22" height="16"><use href="#book"/></svg></span><span class="c w37"></span><span class="c w27"></span><span class="c w29"></span>
</div>

<footer class="task">
  <button class="start"><svg width="20" height="18"><use href="#flag"/></svg><span>пуск</span></button>
  <button class="q"><svg class="i"><use href="#winamp"/></svg></button><button class="q"><svg class="i"><use href="#ie"/></svg></button><button class="q"><svg class="i"><use href="#wmp"/></svg></button><button class="q more">»</button>
  <button class="t"><svg class="i"><use href="#drive"/></svg>Съемный диск (H:)</button>
  <button class="t"><svg class="i"><use href="#folder"/></svg>Методичка к КР</button>
  <button class="t cur"><svg class="i"><use href="#word"/></svg>МУ по кр наше - Micr...</button>
  <button class="t"><svg class="i"><use href="#word"/></svg>МУ по кр компьюте...</button>
  <div class="tray"><svg class="i"><use href="#usb"/></svg><svg class="i"><use href="#ut"/></svg><svg class="i"><use href="#net"/></svg><svg class="i"><use href="#snd"/></svg><svg class="i"><use href="#info"/></svg><span class="lang">Ru</span><time>8:09</time></div>
</footer>
</body>
</html>
```
FILE: styles.css
```css
* { box-sizing: border-box; }
body {
  margin: 0;
  height: 100vh;
  display: flex;
  flex-direction: column;
  overflow: hidden;
  font: 11px/16px "DejaVu Sans Condensed", "DejaVu Sans", sans-serif;
  color: #000;
  background: #ece9d8;
}
button { font: inherit; color: inherit; background: none; border: 0; padding: 0; margin: 0; flex: none; white-space: nowrap; }
svg { display: block; flex: none; }
.defs { position: absolute; width: 0; height: 0; }
.i { width: 16px; height: 16px; }
.glyph-abc { font: bold 6px "Liberation Sans", sans-serif; }
.glyph-ab { font: 9px "Liberation Sans", sans-serif; }

.title {
  height: 26px;
  flex: none;
  display: flex;
  align-items: center;
  gap: 2px;
  padding: 0 1px 0 2px;
  background: linear-gradient(#3f95ff 0, #0a5fe8 3px, #0054e3 8px, #0058ee 14px, #0068ff 22px, #0050dd 25px, #003cc0);
}
.title h1 { flex: 1; margin: 0; padding-left: 2px; font: bold 12px/20px "DejaVu Sans Condensed", sans-serif; color: #fff; text-shadow: 1px 1px #0a246a; }
.wb { width: 21px; height: 21px; border: 1px solid #fff; border-radius: 3px; background: linear-gradient(135deg, #7ea4f5, #2f62e0 40%, #1f52d4); }
.wb.red { background: linear-gradient(135deg, #f0a080, #dd4a22 45%, #c83a10); }

.bars { flex: none; background: linear-gradient(90deg, #9ebef5, #c4daf9 60%); border-bottom: 1px solid #87877f; }
.menu { display: flex; align-items: center; height: 25px; padding: 0 4px 2px 6px; }
.menu button { margin-right: 15px; }
.menu .grip { margin-right: 9px; }
.menu .x { margin: 0 0 0 7px; }
.menu .x svg { width: 8px; height: 8px; }
.grip { width: 2px; height: 16px; flex: none; background: repeating-linear-gradient(#27417e 0 2px, transparent 2px 4px); margin: 0 2px; }
.menu .grip { height: 10px; margin-left: 0; }
.tb {
  display: flex;
  align-items: center;
  width: max-content;
  height: 25px;
  margin: 0 0 1px 3px;
  border-radius: 3px;
  background: linear-gradient(#ddecfe, #c5dbf8 50%, #81a9e2 96%, #3b619c);
}
.pictb { margin-left: 7px; }
.b { width: 23px; height: 23px; display: flex; align-items: center; justify-content: center; }
.b.on, .vb.on { border: 1px solid #000080; background: #ffb866; }
.ch { font: 15px/20px "Liberation Serif", serif; }
.sep { width: 1px; height: 15px; margin: 0 3px 0 2px; background: #6a8ccb; box-shadow: 1px 1px #f1f9ff; flex: none; }
.dd { width: 11px; height: 22px; display: flex; align-items: center; justify-content: center; }
.dd svg, .tri { width: 5px; height: 3px; }
.off { color: #8d8d8d; }
.end {
  width: 11px; height: 25px; margin-left: 3px;
  display: flex; align-items: end; justify-content: center; padding-bottom: 3px;
  border-radius: 0 4px 4px 0;
  background: linear-gradient(#6f9be8, #0c3b9c);
}
.end svg { width: 7px; height: 7px; }
.combo {
  appearance: none;
  flex: none;
  height: 18px;
  margin: 0 3px 2px 0;
  padding: 0 12px 0 2px;
  border: 1px solid #fff;
  border-radius: 0;
  font: inherit;
  line-height: 16px;
  color: #000;
  background:
    url("data:image/svg+xml,%3Csvg xmlns='http://www.w3.org/2000/svg' width='11' height='16'%3E%3Cpath fill='%23c4d9f7' d='M0 0h11v16H0z'/%3E%3Cpath d='M3 7h5L5.500 10z'/%3E%3C/svg%3E") right top no-repeat #fff;
}
.c-zoom { width: 56px; margin: 0 2px 0 1px; }
.c-style { width: 98px; margin-left: 1px; }
.c-font { width: 125px; }
.c-size { width: 46px; margin-right: 2px; }
.menu .ask { width: 148px; margin: 0 0 0 auto; }
.ask::placeholder { color: #808080; opacity: 1; }
.txt { height: 22px; display: flex; align-items: center; }
.read { width: 62px; gap: 1px; padding-left: 3px; }
.t1 { width: 68px; gap: 4px; padding-left: 3px; }
.t2 { width: 80px; gap: 4px; padding-left: 3px; }

.work { flex: 1; min-height: 0; display: grid; grid-template-columns: 26px minmax(0, 1fr) 19px; }
.vruler { background: #d8e7fc; border-left: 1px solid #87877f; padding: 3px 4px; }
.tab { width: 17px; height: 16px; border: 1px solid #4a6ab0; background: #eaf2fe; display: grid; place-items: center; }
.tab svg { width: 8px; height: 8px; }
.center { display: flex; flex-direction: column; min-height: 0; }
.ruler { flex: none; height: 24px; padding-left: 50px; background: #d8e7fc; overflow: hidden; }
.rnum { font: 10px "DejaVu Sans Condensed", sans-serif; text-anchor: middle; }
.doc { flex: 1; min-height: 0; display: flex; justify-content: center; gap: 15px; padding-top: 16px; overflow: hidden; background: #9199ae; }
.page { width: 561px; flex: none; border: solid #000; border-width: 1px 1px 0 1px; background: #fff; box-shadow: 2px 2px #000; }
.page p { margin: 276px 0 0; padding-left: 10px; text-align: center; font: 16px/22px "Liberation Serif", serif; }
.fig { margin: 75px 0 0 71px; }
.thin { fill: none; stroke: #444; }
.tips { fill: #111; }
.thick { fill: none; stroke: #000; stroke-width: 2; }
.blue { fill: none; stroke: #00f; stroke-width: 2; }
.fig text { text-anchor: middle; font-family: "DejaVu Sans Condensed", sans-serif; font-style: italic; }
.dim { font-size: 12px; fill: #222; }
.big { font-size: 15px; fill: #555; }
.name { font-size: 21px; fill: #555; }
.sm { font-size: 8px; fill: #000; }
.md { font-size: 11px; fill: #111; }
.axis { font-size: 12px; fill: #777; }

.vscroll { display: flex; flex-direction: column; align-items: start; background: #f1efe6; border-right: 1px solid #d7d3c2; }
.split { width: 17px; height: 6px; border: 1px solid #000; border-width: 0 1px 1px 0; background: #ece9d8; }
.sb { width: 17px; height: 17px; border: 1px solid #fff; border-radius: 3px; background: linear-gradient(135deg, #dbe5fe, #b7c9f6); box-shadow: inset -1px -1px #9fb5e8; }
.sb svg { width: 15px; height: 15px; }
.thumb { border: 1px solid #fff; border-radius: 3px; box-shadow: inset -1px -1px #9fb5e8; }
.thumb::before { content: ""; }
.thumb.v { width: 17px; height: 169px; display: grid; place-items: center; background: linear-gradient(90deg, #ccdafd, #bccdf9); }
.thumb.v::before { width: 8px; height: 8px; background: repeating-linear-gradient(#8fa9e6 0 1px, #eef3ff 1px 2px); }
.thumb.h { flex: 1; height: 17px; margin: 0 1px; display: grid; place-items: center; background: linear-gradient(#ccdafd, #bccdf9); }
.thumb.h::before { width: 8px; height: 6px; background: repeating-linear-gradient(90deg, #8fa9e6 0 1px, #eef3ff 1px 2px); }
.fillr { flex: 1; }
.nav { width: 17px; height: 17px; display: grid; place-items: center; background: #ece9d8; }
.nav svg { width: 8px; height: 8px; }
.hrow { flex: none; height: 19px; display: flex; align-items: center; padding: 0 19px 1px 2px; }
.vb { width: 17px; height: 17px; display: grid; place-items: center; }
.vb svg { width: 12px; height: 12px; }

.drawbar { flex: none; height: 27px; border-bottom: 1px solid #8d8d80; background: linear-gradient(90deg, #9ebef5, #c4daf9 60%); }
.status { flex: none; height: 20px; display: flex; align-items: center; gap: 5px; padding: 2px 5px 1px; }
.c { flex: none; height: 17px; display: flex; align-items: center; justify-content: center; border: 1px solid #d0cec5; overflow: hidden; white-space: nowrap; }
.s1 { width: 194px; justify-content: start; padding-left: 5px; }
.s1 span { width: 66px; flex: none; }
.s1 span:last-child { padding-left: 17px; }
.s2 { width: 166px; justify-content: start; padding-left: 2px; color: #aca899; }
.s2 span { width: 50px; flex: none; }
.s2 span + span { padding-left: 10px; }
.g { color: #aca899; }
.w27 { width: 27px; }
.w29 { width: 29px; }
.w33 { width: 33px; }
.w37 { width: 37px; }
.w40 { width: 44px; margin-right: 1px; }
.w65 { width: 65px; }

.task { flex: none; height: 30px; display: flex; align-items: center; color: #fff; background: linear-gradient(#1f5fd0, #3a85ee 3px, #245edb 7px, #2259dc 26px, #1941a5); }
.start {
  width: 98px; height: 30px; margin-right: 7px; display: flex; align-items: center; gap: 4px; padding-left: 10px;
  border-radius: 0 10px 10px 0;
  background: linear-gradient(#6fb86f, #3c9a3c 5px, #37913a 20px, #2a7a2c);
  font: italic bold 16px/20px "Open Sans", sans-serif;
  text-shadow: 1px 1px 1px #234;
}
.q { width: 23px; display: grid; place-items: center; }
.more { width: 22px; margin-right: 2px; padding-bottom: 10px; color: #b9d4ff; font-size: 13px; }
.t {
  width: 158px; height: 24px; margin: 2px 2px 0 0; padding-left: 9px; display: flex; align-items: center; gap: 3px;
  border-radius: 3px; text-align: left; overflow: hidden;
  background: linear-gradient(#5a9af8, #3c81f3 4px, #3a7df0 20px, #2c68dc);
}
.t.cur { background: #1e52b7; }
.tray { margin-left: auto; height: 30px; width: 164px; display: flex; align-items: center; gap: 2px; padding-left: 9px; border-left: 1px solid #0a3c94; background: linear-gradient(#1497ea, #19b0f6 3px, #1290e8 8px, #1290e8 26px, #0d6fc0); }
.lang { width: 16px; height: 16px; background: #000080; text-align: center; }
time { margin-left: 7px; }
```
